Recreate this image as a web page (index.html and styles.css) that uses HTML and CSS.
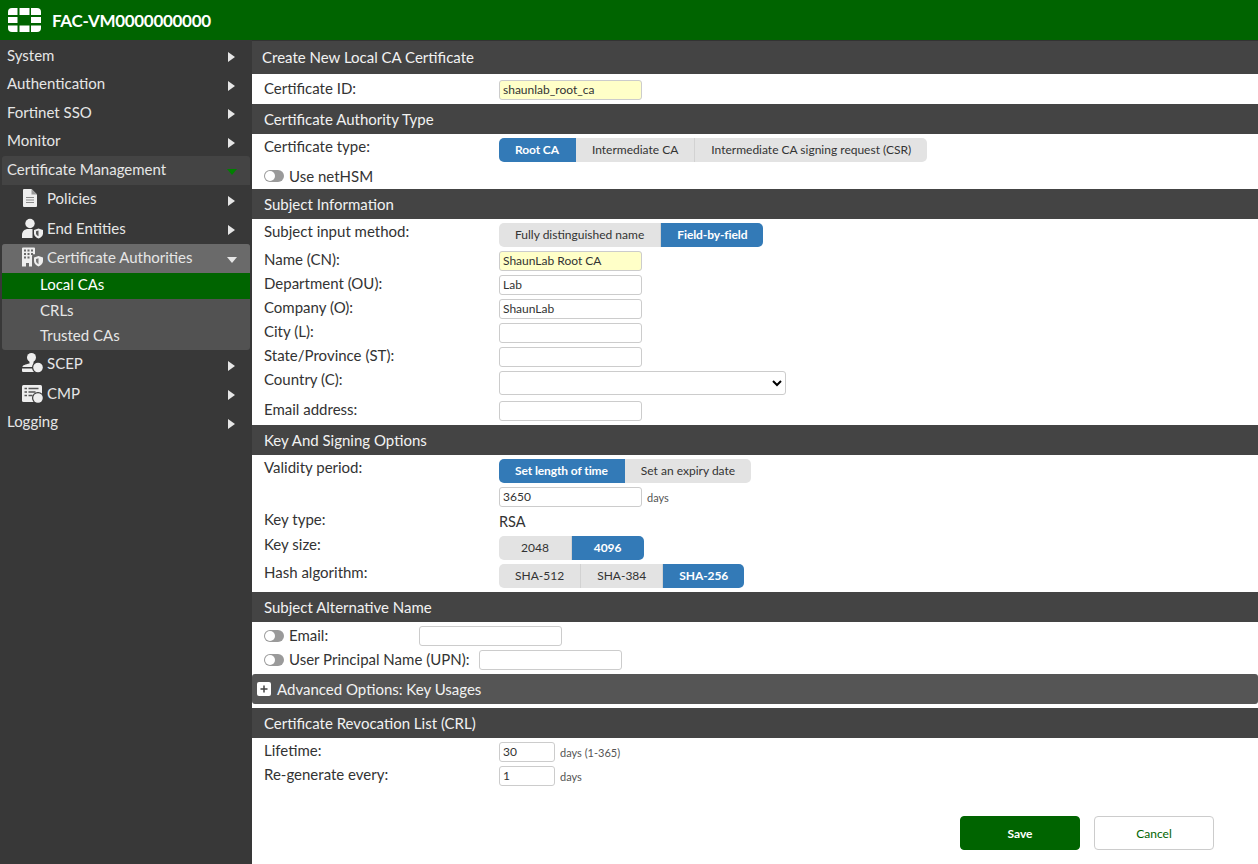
FILE: index.html
```html
<!DOCTYPE html>
<html lang="en">
<head>
<meta charset="utf-8">
<title>FAC-VM0000000000</title>
<link rel="stylesheet" href="styles.css">
</head>
<body>
<header class="topbar">
  <svg class="logo" width="33" height="24" viewBox="0 0 33 24" fill="#fff">
    <path d="M0 4 Q0 0 4 0 H9.500 V7 H0Z"/><path d="M11.500 0 H21.500 V7 H11.500Z"/><path d="M23 0 H29 Q33 0 33 4 V7 H23Z"/>
    <path d="M0 9 H9.500 V15 H0Z"/><path d="M23 9 H33 V15 H23Z"/>
    <path d="M0 17.500 H9.500 V24 H4 Q0 24 0 20Z"/><path d="M11.500 17.500 H21.500 V24 H11.500Z"/><path d="M23 17.500 H33 V20 Q33 24 29 24 H23Z"/>
  </svg>
  <span class="brand">FAC-VM0000000000</span>
</header>
<div class="layout">
  <nav class="sidebar">
    <div class="nav-item"><span>System</span><i class="arrow"></i></div>
    <div class="nav-item"><span>Authentication</span><i class="arrow"></i></div>
    <div class="nav-item"><span>Fortinet SSO</span><i class="arrow"></i></div>
    <div class="nav-item"><span>Monitor</span><i class="arrow"></i></div>
    <div class="nav-item open"><span>Certificate Management</span><i class="arrow-down green"></i></div>
    <div class="nav-sub">
      <svg class="ico" width="22" height="22" viewBox="0 0 22 22"><path fill="#eee" d="M3 2h7.500L16 7.500V19a1 1 0 0 1-1 1H3a1 1 0 0 1-1-1V3a1 1 0 0 1 1-1z"/><path fill="#999" d="M10.500 2v5.500H16z"/><path fill="none" stroke="#888" d="M5 10.500h8M5 13h8M5 15.500h8"/></svg>
      <span>Policies</span><i class="arrow"></i>
    </div>
    <div class="nav-sub">
      <svg class="ico" width="22" height="22" viewBox="0 0 22 22"><circle cx="9" cy="6.500" r="4.700" fill="#eee"/><path fill="#eee" d="M1 21v-3c0-4 3-6 6-6h4c1 0 2 .3 2 .5V21z"/><path fill="#383838" d="M11.500 11.500h11V22h-11z"/><path fill="#eee" d="M13 13l4.500-1.500L22 13v3.500c0 2.500-2 4-4.500 5-2.500-1-4.500-2.500-4.500-5z"/><path fill="#555" d="M15 14.300l2.500-.8v5.800c-1.300-.7-2.500-1.500-2.500-3z"/></svg>
      <span>End Entities</span><i class="arrow"></i>
    </div>
    <div class="nav-group">
      <div class="nav-sub active-head">
        <svg class="ico" width="22" height="22" viewBox="0 0 22 22"><path fill="#eee" d="M2 1.500h11a1 1 0 0 1 1 1v6h-2l-1 2v10H8V17H5v3.500H1V2.500a1 1 0 0 1 1-1z"/><path fill="#6a6a6a" d="M3 3.500h2v2H3zM6.500 3.500h2v2h-2zM10 3.500h2v2h-2zM3 7h2v2H3zM6.500 7h2v2h-2zM10 7h2v2h-2zM3 10.500h2v2H3zM6.500 10.500h2v2h-2z"/><path fill="#6a6a6a" d="M11.500 8.500h11V22h-11z"/><path fill="#eee" d="M13 11.500l4.500-1.500 4.500 1.500V15c0 2.500-2 4.500-4.500 5.500-2.500-1-4.500-3-4.500-5.500z"/><path fill="#777" d="M15 13l2.500-.8v6c-1.300-.7-2.500-1.800-2.500-3.200z"/></svg>
        <span>Certificate Authorities</span><i class="arrow-down"></i>
      </div>
      <div class="leaf current">Local CAs</div>
      <div class="leaf">CRLs</div>
      <div class="leaf trusted">Trusted CAs</div>
    </div>
    <div class="nav-sub scep">
      <svg class="ico" width="22" height="22" viewBox="0 0 22 22"><circle cx="10.500" cy="5.500" r="4.500" fill="#eee"/><path fill="#eee" d="M8.500 9h4v3.500h2v2.500H1.500c0-2 3-2.500 7-3.500z"/><path fill="#eee" d="M1 16.500h12V20H2a1 1 0 0 1-1-1z"/><circle cx="17" cy="15.500" r="6" fill="#383838"/><circle cx="17" cy="15.500" r="4.800" fill="#eee"/></svg>
      <span>SCEP</span><i class="arrow"></i>
    </div>
    <div class="nav-sub cmp">
      <svg class="ico" width="22" height="22" viewBox="0 0 22 22"><rect x="1" y="3" width="20" height="17" rx="1.500" fill="#eee"/><path stroke="#555" stroke-width="1.300" d="M3.500 6.500h2.500M7.500 6.500h10M3.500 10h2.500M7.500 10h7M3.500 13.500h2.500M7.500 13.500h4"/><circle cx="17" cy="16" r="6" fill="#383838"/><circle cx="17" cy="16" r="4.800" fill="#eee"/></svg>
      <span>CMP</span><i class="arrow"></i>
    </div>
    <div class="nav-item logging"><span>Logging</span><i class="arrow"></i></div>
  </nav>
  <main class="content">
    <h1 class="bar title">Create New Local CA Certificate</h1>
    <div class="row r-id"><label class="lbl">Certificate ID:</label><input class="inp req" value="shaunlab_root_ca"></div>

    <h2 class="bar">Certificate Authority Type</h2>
    <div class="row r-seg"><label class="lbl">Certificate type:</label>
      <div class="seg"><span class="on">Root CA</span><span>Intermediate CA</span><span>Intermediate CA signing request (CSR)</span></div>
    </div>
    <div class="row r-toggle"><i class="toggle"></i><label class="tlbl">Use netHSM</label></div>

    <h2 class="bar">Subject Information</h2>
    <div class="row r-seg"><label class="lbl">Subject input method:</label>
      <div class="seg"><span>Fully distinguished name</span><span class="on">Field-by-field</span></div>
    </div>
    <div class="row r-inp"><label class="lbl">Name (CN):</label><input class="inp req" value="ShaunLab Root CA"></div>
    <div class="row r-inp"><label class="lbl">Department (OU):</label><input class="inp" value="Lab"></div>
    <div class="row r-inp"><label class="lbl">Company (O):</label><input class="inp" value="ShaunLab"></div>
    <div class="row r-inp"><label class="lbl">City (L):</label><input class="inp"></div>
    <div class="row r-inp"><label class="lbl">State/Province (ST):</label><input class="inp"></div>
    <div class="row r-sel"><label class="lbl">Country (C):</label><select class="sel"><option></option></select></div>
    <div class="row r-inp last"><label class="lbl">Email address:</label><input class="inp"></div>

    <h2 class="bar">Key And Signing Options</h2>
    <div class="row r-seg"><label class="lbl">Validity period:</label>
      <div class="seg"><span class="on">Set length of time</span><span>Set an expiry date</span></div>
    </div>
    <div class="row r-inp"><span class="lbl"></span><input class="inp" value="3650"><span class="unit">days</span></div>
    <div class="row r-rsa"><label class="lbl">Key type:</label><span class="val">RSA</span></div>
    <div class="row r-seg"><label class="lbl">Key size:</label>
      <div class="seg"><span class="wide">2048</span><span class="on wide">4096</span></div>
    </div>
    <div class="row r-seg end"><label class="lbl">Hash algorithm:</label>
      <div class="seg"><span>SHA-512</span><span>SHA-384</span><span class="on">SHA-256</span></div>
    </div>

    <h2 class="bar">Subject Alternative Name</h2>
    <div class="row r-san"><i class="toggle"></i><label class="tlbl san-email">Email:</label><input class="inp"></div>
    <div class="row r-san end"><i class="toggle"></i><label class="tlbl san-upn">User Principal Name (UPN):</label><input class="inp"></div>

    <div class="bar adv"><svg class="plus" width="14" height="14" viewBox="0 0 14 14"><rect width="14" height="14" rx="2" fill="#fff"/><path d="M3.500 7h7M7 3.500v7" stroke="#444" stroke-width="1.500"/></svg><span>Advanced Options: Key Usages</span></div>

    <h2 class="bar">Certificate Revocation List (CRL)</h2>
    <div class="row r-inp"><label class="lbl">Lifetime:</label><input class="inp short" value="30"><span class="unit">days (1-365)</span></div>
    <div class="row r-inp"><label class="lbl">Re-generate every:</label><input class="inp short" value="1"><span class="unit">days</span></div>

    <div class="actions"><button class="btn save">Save</button><button class="btn cancel">Cancel</button></div>
  </main>
</div>
</body>
</html>
```
FILE: styles.css
```css
* { box-sizing: border-box; }
html, body { margin: 0; height: 100%; }
body { font-family: Lato, "Open Sans", sans-serif; font-size: 15px; color: #333; background: #fff; overflow: hidden; }

.topbar { height: 40px; background: #006400; display: flex; align-items: center; padding-left: 8px; }
.logo { flex: none; }
.brand { color: #fff; font-size: 17px; font-weight: 700; margin-left: 11px; letter-spacing: -0.3px; }

.layout { display: flex; height: 824px; }
.sidebar { width: 252px; flex: none; background: #383838; color: #e6e6e6; padding: 2px 2px 0 2px; }
.nav-item { height: 28.500px; display: flex; align-items: center; padding: 0 15px 3px 5px; justify-content: space-between; }
.nav-item.open { background: #444; border-radius: 3px 3px 0 0; height: 29px; padding-bottom: 3px; }
.nav-item.logging { height: 28px; }
.nav-sub { height: 29.500px; display: flex; align-items: center; padding: 0 15px 3px 19px; }
.nav-sub.cmp { padding-bottom: 2px; }
.nav-sub span { flex: 1; margin-left: 4px; }
.ico { flex: none; }
.nav-sub.scep { height: 29px; }
.nav-group { background: #525252; border-radius: 3px; overflow: hidden; }
.active-head { background: #6a6a6a; height: 29px; }
.leaf { height: 25.500px; padding: 0 0 3px 38px; display: flex; align-items: center; }
.leaf.current { background: #006400; color: #fff; height: 26px; padding-bottom: 4px; }
.leaf.trusted { padding-bottom: 4px; }
.arrow { width: 0; height: 0; border-left: 7px solid #e6e6e6; border-top: 5px solid transparent; border-bottom: 5px solid transparent; flex: none; margin-top: 5px; }
.arrow-down { width: 0; height: 0; border-top: 6px solid #e6e6e6; border-left: 5px solid transparent; border-right: 5px solid transparent; flex: none; margin: 5px -2px 0 0; }
.arrow-down.green { border-top-color: #008000; }

.content { flex: 1; min-width: 0; display: flex; flex-direction: column; }
.bar { margin: 0; height: 30px; background: #444; color: #f2f2f2; font-size: 15px; font-weight: 400; display: flex; align-items: center; padding-left: 12px; flex: none; }
.bar.title { height: 34px; padding: 0 0 2px 10px; border-top: 1px solid #333; }
.bar.adv { background: #555; border-radius: 3px; margin-bottom: 4px; padding-left: 5px; }
.plus { margin-right: 6px; flex: none; }

.row { display: flex; align-items: flex-start; padding-left: 12px; flex: none; padding-top: 4px; }
.lbl { width: 235px; flex: none; line-height: 20px; margin-top: -2px; }
.inp { width: 143px; height: 20px; border: 1px solid #ccc; border-radius: 3px; font: 12px Lato, sans-serif; color: #333; padding: 0 3px 1px; background: #fff; outline: none; flex: none; }
.inp.req { background: #ffffc8; }
.inp.short { width: 56px; }
.unit { font-size: 11px; color: #555; margin-left: 5px; align-self: center; }

.r-id { height: 30px; padding-top: 6px; }
.r-seg { height: 28px; }
.r-seg.end { height: 32px; }
.r-toggle { height: 27px; align-items: center; padding-top: 1px; }
.r-inp { height: 24px; }
.r-inp.last { height: 30px; padding-top: 6px; }
.r-sel { height: 28px; }
.sel { width: 287px; height: 24px; border: 1px solid #ccc; border-radius: 3px; background: #fff; flex: none; }

.seg { display: inline-flex; height: 24px; font-size: 12px; }
.seg span { display: flex; align-items: center; padding: 0 16px 2px; background: #e3e3e3; color: #333; border-right: 1px solid #d2d2d2; white-space: nowrap; }
.seg span.wide { padding: 0 22px 2px; }
.seg .on { background: #337ab7; color: #fff; font-weight: 700; letter-spacing: -0.1px; border-right-color: #337ab7; }
.seg span:first-child { border-radius: 5px 0 0 5px; }
.seg span:last-child { border-radius: 0 5px 5px 0; border-right: none; }
.seg span.on.wide { padding-right: 23px; }

.r-rsa { height: 25px; }
.val { font-size: 14.500px; line-height: 20px; margin-top: 1px; }

.toggle { width: 20px; height: 12px; background: #9a9a9a; border-radius: 6px; position: relative; flex: none; margin-right: 5px; }
.toggle::after { content: ""; position: absolute; left: 1px; top: 1px; width: 10px; height: 10px; border-radius: 50%; background: #fff; }

.r-san { height: 24px; }
.r-san.end { height: 28px; }
.r-san .toggle { margin-top: 4px; }
.r-san .tlbl { margin-top: -1px; margin-bottom: 1px; }
.san-email { width: 130px; }
.san-upn { width: 190px; }
.tlbl { flex: none; line-height: 20px; }

.actions { display: flex; justify-content: flex-end; gap: 14px; padding: 30px 44px 0 0; }
.btn { width: 120px; height: 34px; border-radius: 4px; font: 700 12px Lato, sans-serif; border: 1px solid #ccc; }
.save { background: #006400; color: #fff; border-color: #006400; }
.cancel { background: #fff; color: #006400; font-weight: 400; }
```
